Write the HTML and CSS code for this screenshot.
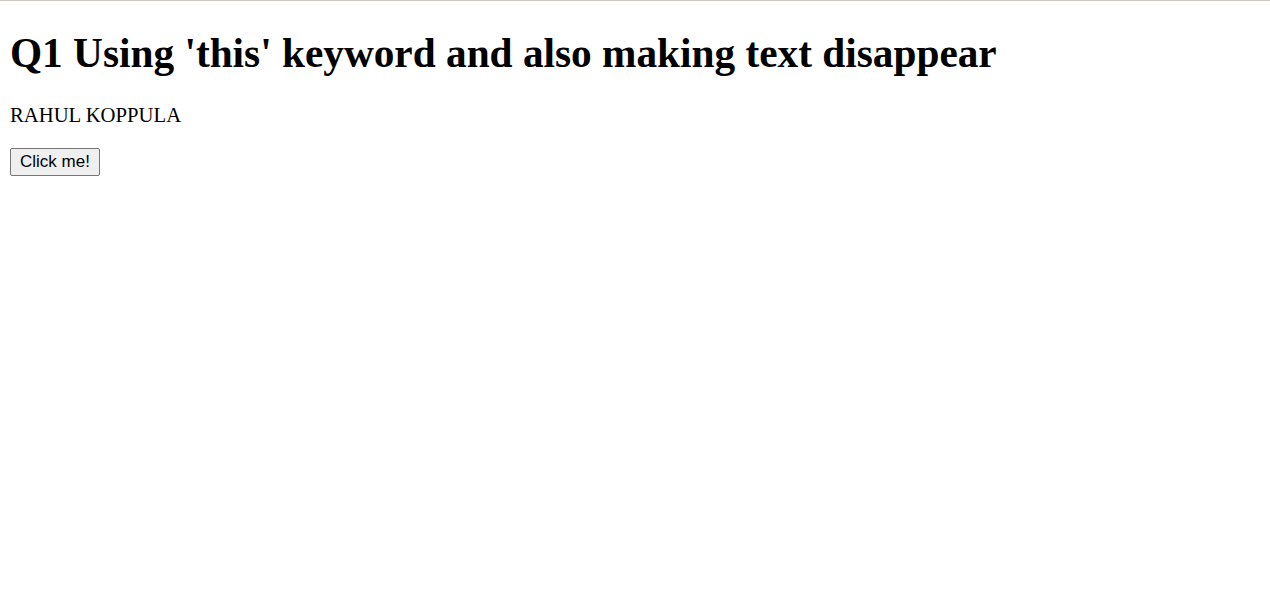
FILE: index.html
```html
<!DOCTYPE html>
<html>
<head>
<meta charset="utf-8">
<title>Q1</title>
<link rel="stylesheet" href="styles.css">
</head>
<body>
<h1 class="title">Q1 Using 'this' keyword and also making text disappear</h1>
<p class="name">RAHUL KOPPULA</p>
<button class="btn">Click me!</button>
</body>
</html>
```
FILE: styles.css
```css
html {
  border-top: 1px solid #cfc5c0;
  background: #fff;
}
body {
  margin: 0;
  padding: 0 10px;
  font-family: "Liberation Serif", "Times New Roman", serif;
  font-size: 20.7px;
  color: #000;
}
.title {
  font-size: 41.3px;
  font-weight: bold;
  margin: 28px 0 27px;
}
.name {
  margin: 0 0 21px;
}
.btn {
  display: block;
  font-family: "Liberation Sans", Arial, sans-serif;
  font-size: 17px;
  line-height: 20px;
  color: #000;
  background: #efefef;
  border: 1px solid #767676;
  border-radius: 2px;
  padding: 3px 9px;
}
```
